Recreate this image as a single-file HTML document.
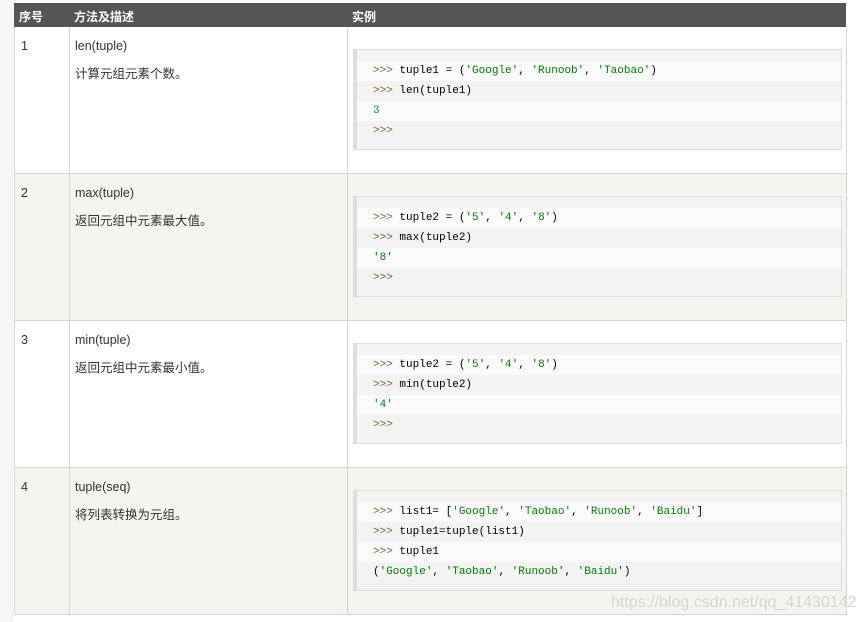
<!DOCTYPE html>
<html><head><meta charset="utf-8"><style>
body{margin:0;width:864px;height:622px;background:#fff;position:relative;overflow:hidden;font-family:"Liberation Sans","Noto Sans CJK SC",sans-serif;font-size:12.5px;color:#333}
.strip{position:absolute;left:0;top:0;width:12px;height:622px;background:#f7f7f7;border-right:1px solid #eee}
.hdr{position:absolute;left:14px;top:3px;width:832px;height:24px;background:#555;color:#fff;font-weight:bold;font-size:12px}
.hdr span{position:absolute;top:5px}
.row{position:absolute;left:14px;width:831px;height:146px;border-left:1px solid #d4d4d4;border-right:1px solid #d4d4d4;border-bottom:1px solid #d4d4d4}
.row .c1{position:absolute;left:54px;top:0;bottom:0;border-left:1px solid #d4d4d4}
.row .c2{position:absolute;left:332px;top:0;bottom:0;border-left:1px solid #d4d4d4}
.num{position:absolute;left:6px;top:12px}
.fn{position:absolute;left:60px;top:12px}
.desc{position:absolute;left:60px;top:36px}
.code{position:absolute;left:338px;top:22px;width:484px;height:99px;border:1px solid #ddd;border-left:4px solid #ddd;background:#f3f3f3;font-family:"Liberation Mono",monospace;font-size:11px;color:#000}
.code div{height:20px;line-height:20px;padding-left:16px}
.code div:nth-child(odd){background:#fbfbfb}
.code div:first-child{margin-top:11px}
.p{color:#806030}.s{color:#008000}.n{color:#008c8c}
.wm{position:absolute;left:611px;top:594px;color:#d4d4d4;font-size:16px}
</style></head><body>
<div class="strip"></div>
<div class="hdr"><span style="left:5px">序号</span><span style="left:60px">方法及描述</span><span style="left:338px">实例</span></div>

<div class="row" style="top:27px;background:#fff">
<div class="c1"></div><div class="c2"></div>
<div class="num">1</div><div class="fn">len(tuple)</div><div class="desc">计算元组元素个数。</div>
<div class="code"><div><span class="p">&gt;&gt;&gt;</span> tuple1 = (<span class="s">'Google'</span>, <span class="s">'Runoob'</span>, <span class="s">'Taobao'</span>)</div><div><span class="p">&gt;&gt;&gt;</span> len(tuple1)</div><div><span class="n">3</span></div><div><span class="p">&gt;&gt;&gt;</span></div></div>
</div>

<div class="row" style="top:174px;background:#f5f4f0">
<div class="c1"></div><div class="c2"></div>
<div class="num">2</div><div class="fn">max(tuple)</div><div class="desc">返回元组中元素最大值。</div>
<div class="code"><div><span class="p">&gt;&gt;&gt;</span> tuple2 = (<span class="s">'5'</span>, <span class="s">'4'</span>, <span class="s">'8'</span>)</div><div><span class="p">&gt;&gt;&gt;</span> max(tuple2)</div><div><span class="s">'8'</span></div><div><span class="p">&gt;&gt;&gt;</span></div></div>
</div>

<div class="row" style="top:321px;background:#fff">
<div class="c1"></div><div class="c2"></div>
<div class="num">3</div><div class="fn">min(tuple)</div><div class="desc">返回元组中元素最小值。</div>
<div class="code"><div><span class="p">&gt;&gt;&gt;</span> tuple2 = (<span class="s">'5'</span>, <span class="s">'4'</span>, <span class="s">'8'</span>)</div><div><span class="p">&gt;&gt;&gt;</span> min(tuple2)</div><div><span class="s">'4'</span></div><div><span class="p">&gt;&gt;&gt;</span></div></div>
</div>

<div class="row" style="top:468px;background:#f5f4f0">
<div class="c1"></div><div class="c2"></div>
<div class="num">4</div><div class="fn">tuple(seq)</div><div class="desc">将列表转换为元组。</div>
<div class="code"><div><span class="p">&gt;&gt;&gt;</span> list1= [<span class="s">'Google'</span>, <span class="s">'Taobao'</span>, <span class="s">'Runoob'</span>, <span class="s">'Baidu'</span>]</div><div><span class="p">&gt;&gt;&gt;</span> tuple1=tuple(list1)</div><div><span class="p">&gt;&gt;&gt;</span> tuple1</div><div>(<span class="s">'Google'</span>, <span class="s">'Taobao'</span>, <span class="s">'Runoob'</span>, <span class="s">'Baidu'</span>)</div></div>
</div>
<div class="wm">https://blog.csdn.net/qq_41430142</div>
</body></html>
